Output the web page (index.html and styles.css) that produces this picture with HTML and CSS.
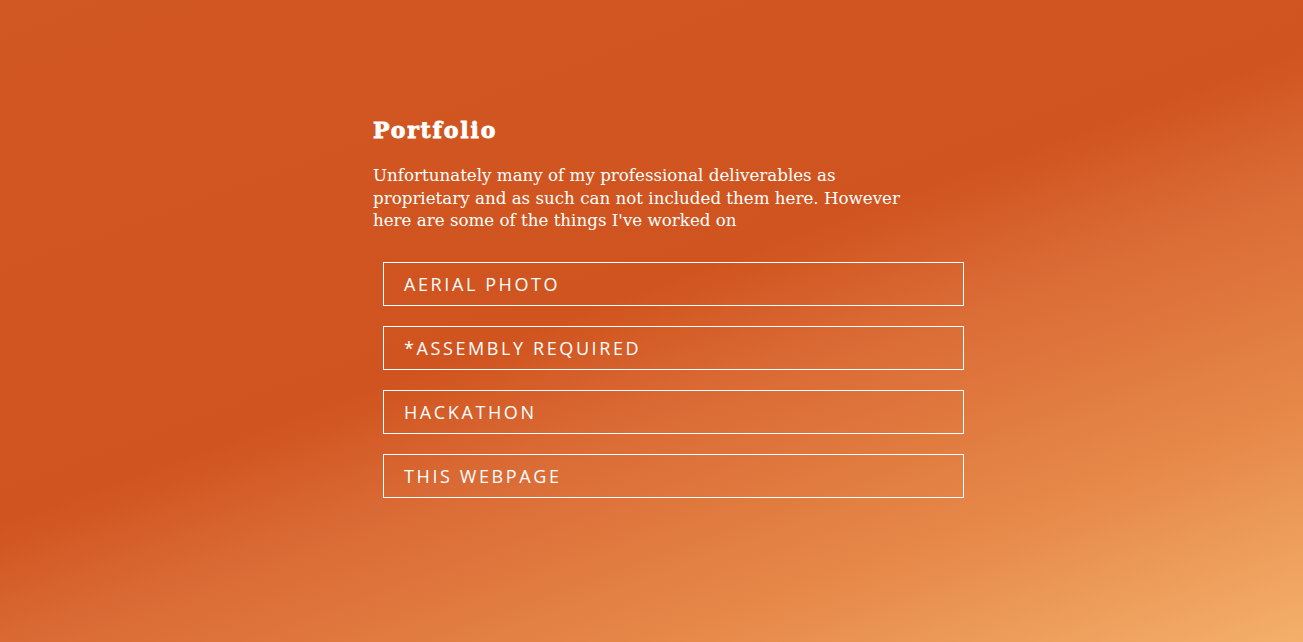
FILE: index.html
```html
<!DOCTYPE html>
<html lang="en">
<head>
<meta charset="utf-8">
<title>Portfolio</title>
<link rel="stylesheet" href="styles.css">
</head>
<body>
<main class="page">
  <section class="portfolio">
    <h1 class="title">Portfolio</h1>
    <p class="intro">Unfortunately many of my professional deliverables as proprietary and as such can not included them here. However here are some of the things I've worked on</p>
    <ul class="projects">
      <li><a class="project" href="#">Aerial Photo</a></li>
      <li><a class="project" href="#">*Assembly Required</a></li>
      <li><a class="project" href="#">Hackathon</a></li>
      <li><a class="project" href="#">This Webpage</a></li>
    </ul>
  </section>
</main>
</body>
</html>
```
FILE: styles.css
```css
html, body {
  margin: 0;
  padding: 0;
  height: 100%;
}
body {
  background: linear-gradient(160deg, #D15723 0%, #D0541F 47%, #DA6A35 58%, #E68848 79%, #F4B06B 100%);
  color: #fff;
  font-family: "DejaVu Serif", serif;
  overflow: hidden;
}
.page {
  height: 100%;
  display: flex;
  justify-content: center;
}
.portfolio {
  width: 591px;
  padding-top: 116px;
  margin-left: 34px;
}
.title {
  margin: 0;
  font-family: "DejaVu Serif", serif;
  font-weight: 900;
  font-size: 22px;
  line-height: 28px;
  letter-spacing: 1.8px;
  -webkit-text-stroke: 0.8px #fff;
}
.intro {
  margin: 20px 0 0;
  width: 540px;
  font-size: 16.7px;
  line-height: 22.5px;
}
.projects {
  list-style: none;
  margin: 30px 0 0;
  padding: 0 0 0 10px;
  display: flex;
  flex-direction: column;
  gap: 20px;
}
.project {
  display: flex;
  align-items: center;
  height: 42px;
  border: 1px solid #fff;
  padding: 0 20px;
  color: #fff;
  text-decoration: none;
  text-transform: uppercase;
  font-family: "Open Sans", sans-serif;
  font-size: 18px;
  letter-spacing: 2.6px;
}
```
